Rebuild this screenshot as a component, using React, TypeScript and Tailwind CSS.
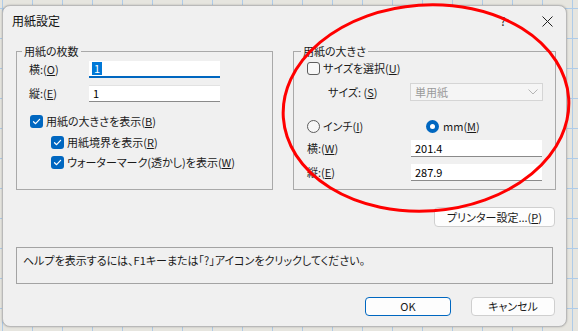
import React from 'react';

const font = "font-['Noto_Sans_CJK_JP',sans-serif] [font-feature-settings:'palt']";

function Mn({ k }: { k: string }) {
  return (
    <span>
      (<span className="underline underline-offset-[1px]">{k}</span>)
    </span>
  );
}

function Check({ checked }: { checked: boolean }) {
  if (!checked) {
    return <span className="block w-[13px] h-[13px] rounded-[3px] border border-[#5d5d5d] bg-[#f7f7f7]" />;
  }
  return (
    <span className="flex items-center justify-center w-[13px] h-[13px] rounded-[3px] bg-[#0067c0]">
      <svg width="9" height="9" viewBox="0 0 9 9" fill="none">
        <path d="M1.5 4.7 L3.6 6.7 L7.6 2.3" stroke="#fff" strokeWidth="1.2" strokeLinecap="round" strokeLinejoin="round" />
      </svg>
    </span>
  );
}

function Radio({ checked }: { checked: boolean }) {
  if (!checked) {
    return <span className="block w-[13px] h-[13px] rounded-full border border-[#5d5d5d] bg-[#f7f7f7]" />;
  }
  return (
    <span className="flex items-center justify-center w-[13px] h-[13px] rounded-full bg-[#0067c0]">
      <span className="block w-[5px] h-[5px] rounded-full bg-white" />
    </span>
  );
}

function Field({ value, className = '' }: { value: string; className?: string }) {
  return (
    <div className={`h-[17px] bg-white border-b border-[#8a8a8a] flex items-center pl-[4px] text-[11px] text-black ${className}`}>
      {value}
    </div>
  );
}

export default function App() {
  return (
    <div
      className={`relative w-[578px] h-[331px] overflow-hidden bg-[#e6e5df] bg-[linear-gradient(to_right,#aecbe8_1px,transparent_1px),linear-gradient(to_bottom,#aecbe8_1px,transparent_1px)] bg-[length:30px_30px] bg-[position:2px_8px] pt-[5px] pl-[2px] ${font} text-[11px] text-[#1a1a1a]`}
    >
      <div className="w-[565px] h-[322px] bg-[#f0f0f0] rounded-[8px] border border-[#b9b9b9] shadow-[0_0_2px_rgba(0,0,0,0.25)] flex flex-col">
        {/* title bar */}
        <div className="h-[30px] flex items-center pl-[9px]">
          <span className="text-[12px] text-[#111]">用紙設定</span>
          <span className="ml-auto text-[12px] text-[#222] mr-[36px]">?</span>
          <svg width="11" height="11" viewBox="0 0 11 11" className="mr-[13px]">
            <path d="M0.5 0.5 L10.5 10.5 M10.5 0.5 L0.5 10.5" stroke="#222" strokeWidth="1" />
          </svg>
        </div>

        {/* groups */}
        <div className="flex gap-[20px] pl-[13px] mt-[8px]">
          <fieldset className="w-[257px] h-[146px] border border-[#a9a9a9] pl-[12px] pt-[3px]">
            <legend className="-ml-[7px] px-[2px] text-[11px] leading-[14px]">用紙の枚数</legend>
            <div className="flex items-center h-[17px]">
              <span className="w-[60px]">横:<Mn k="O" /></span>
              <div className="w-[131px] h-[17px] bg-white border-b-2 border-[#0067c0] flex items-center pl-[3px]">
                <span className="bg-[#0078d7] text-white leading-[13px] px-[2px]">1</span>
              </div>
            </div>
            <div className="flex items-center h-[17px] mt-[7px]">
              <span className="w-[60px]">縦:<Mn k="E" /></span>
              <Field value="1" className="w-[131px] border-t border-t-[#e2e2e2]" />
            </div>
            <div className="flex items-center gap-[3px] h-[20px] mt-[9px] ml-[1px]">
              <Check checked />
              <span>用紙の大きさを表示<Mn k="B" /></span>
            </div>
            <div className="flex items-center gap-[3px] h-[20px] mt-[1px] ml-[22px]">
              <Check checked />
              <span>用紙境界を表示<Mn k="R" /></span>
            </div>
            <div className="flex items-center gap-[3px] h-[20px] ml-[22px]">
              <Check checked />
              <span>ウォーターマーク(透かし)を表示<Mn k="W" /></span>
            </div>
          </fieldset>

          <fieldset className="w-[263px] h-[146px] border border-[#a9a9a9] pl-[13px] pt-[0px]">
            <legend className="-ml-[6px] px-[2px] text-[11px] leading-[14px]">用紙の大きさ</legend>
            <div className="flex items-center gap-[3px] h-[20px]">
              <Check checked={false} />
              <span>サイズを選択<Mn k="U" /></span>
            </div>
            <div className="flex items-center h-[18px] mt-[5px]">
              <span className="w-[103px] pl-[21px]">サイズ: <Mn k="S" /></span>
              <div className="w-[133px] h-[18px] border border-[#d5d5d5] bg-[#f5f5f5] flex items-center pl-[4px] text-[#9a9a9a]">
                単用紙
                <svg width="10" height="6" viewBox="0 0 10 6" className="ml-auto mr-[4px]">
                  <path d="M0.5 0.5 L5 5 L9.5 0.5" stroke="#b5b5b5" fill="none" />
                </svg>
              </div>
            </div>
            <div className="flex items-center h-[20px] mt-[15px]">
              <div className="flex items-center gap-[3px] w-[119px]">
                <Radio checked={false} />
                <span>インチ<Mn k="I" /></span>
              </div>
              <div className="flex items-center gap-[4px]">
                <Radio checked />
                <span>mm<Mn k="M" /></span>
              </div>
            </div>
            <div className="flex items-center h-[17px] mt-[4px]">
              <span className="w-[104px]">横:<Mn k="W" /></span>
              <Field value="201.4" className="w-[131px]" />
            </div>
            <div className="flex items-center h-[17px] mt-[7px]">
              <span className="w-[104px]">縦:<Mn k="E" /></span>
              <Field value="287.9" className="w-[131px]" />
            </div>
          </fieldset>
        </div>

        {/* printer button */}
        <div className="flex justify-end pr-[11px] mt-[17px]">
          <button className="w-[121px] h-[20px] rounded-[4px] border border-[#cfcfcf] bg-[#fdfdfd] text-[11px]">
            プリンター設定...<Mn k="P" />
          </button>
        </div>

        {/* help box */}
        <div className="mx-[13px] mt-[20px] h-[37px] border border-[#a3a3a3] px-[6px] pt-[4px] text-[11px]">
          ヘルプを表示するには、F1キーまたは｢?｣アイコンをクリックしてください。
        </div>

        {/* ok / cancel */}
        <div className="flex justify-end gap-[20px] pr-[11px] mt-[13px]">
          <button className="w-[86px] h-[19px] rounded-[4px] border border-[#0067c0] bg-[#fdfdfd] text-[11px]">OK</button>
          <button className="w-[84px] h-[19px] rounded-[4px] border border-[#cfcfcf] bg-[#fdfdfd] text-[11px]">キャンセル</button>
        </div>
      </div>

      {/* red annotation ellipse */}
      <svg className="absolute left-0 top-0 pointer-events-none" width="578" height="331" viewBox="0 0 578 331">
        <ellipse cx="426" cy="108" rx="143" ry="103" fill="none" stroke="#ff0000" strokeWidth="3" transform="rotate(-4 426 108)" />
      </svg>
    </div>
  );
}
